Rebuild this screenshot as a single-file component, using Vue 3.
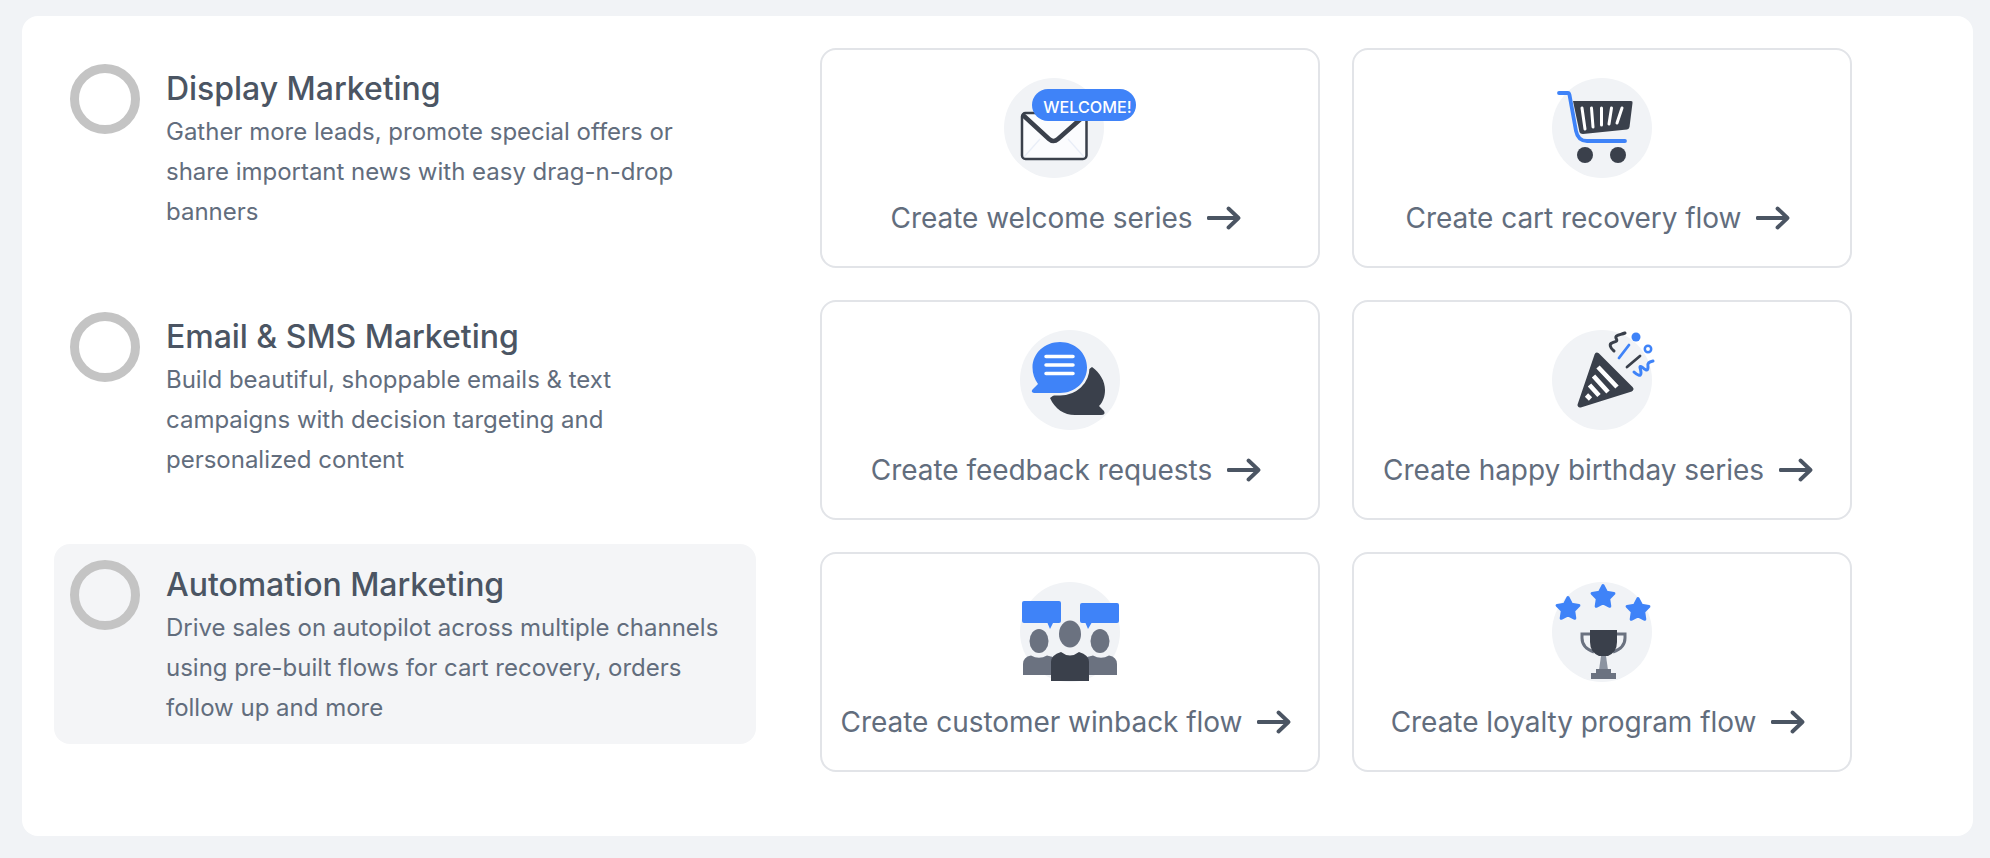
<script setup>
const features = [
  { title: 'Display Marketing', text: 'Gather more leads, promote special offers or share important news with easy drag-n-drop banners', active: false },
  { title: 'Email & SMS Marketing', text: 'Build beautiful, shoppable emails & text campaigns with decision targeting and personalized content', active: false },
  { title: 'Automation Marketing', text: 'Drive sales on autopilot across multiple channels using pre-built flows for cart recovery, orders follow up and more', active: true }
]
const tiles = [
  { id: 'welcome', label: 'Create welcome series' },
  { id: 'cart', label: 'Create cart recovery flow' },
  { id: 'feedback', label: 'Create feedback requests' },
  { id: 'birthday', label: 'Create happy birthday series' },
  { id: 'winback', label: 'Create customer winback flow' },
  { id: 'loyalty', label: 'Create loyalty program flow' }
]
const starPath = (cx, cy, r) => {
  const pts = []
  for (let i = 0; i < 10; i++) {
    const rad = i % 2 ? r * 0.52 : r
    const a = (Math.PI / 5) * i - Math.PI / 2
    pts.push(`${(cx + rad * Math.cos(a)).toFixed(1)},${(cy + rad * Math.sin(a)).toFixed(1)}`)
  }
  return pts.join(' ')
}
</script>

<template>
  <main class="page">
    <section class="card">
      <div class="features">
        <article v-for="f in features" :key="f.title" class="feature" :class="{ active: f.active }">
          <span class="ring"></span>
          <div class="copy">
            <h3>{{ f.title }}</h3>
            <p>{{ f.text }}</p>
          </div>
        </article>
      </div>
      <div class="tiles">
        <a v-for="t in tiles" :key="t.id" class="tile">
          <svg v-if="t.id === 'welcome'" class="icon wide" viewBox="0 0 132 100">
            <circle cx="50" cy="50" r="50" fill="#f1f3f6" />
            <rect x="18" y="35" width="64.500" height="46" rx="3.500" fill="#fbfcfe" stroke="#3a404b" stroke-width="2.500" />
            <path d="M20 79 36 61M80 79 64 61" stroke="#e9eef8" stroke-width="1.200" fill="none" />
            <path d="M20 38 45 61Q49.500 65 54 61L80 38" stroke="#3a404b" stroke-width="4.500" fill="none" stroke-linecap="round" />
            <rect x="28" y="11" width="104" height="32" rx="16" fill="#3f83f8" />
            <text x="83.500" y="34.500" class="badge" text-anchor="middle">WELCOME!</text>
          </svg>
          <svg v-else-if="t.id === 'cart'" class="icon" viewBox="0 0 100 100">
            <circle cx="50" cy="50" r="50" fill="#f1f3f6" />
            <path d="M21 23H79Q81 23 80.500 25L77.500 49Q77 51 75 51.500L31 56Q28 56 27.500 54Z" fill="#3a404b" />
            <path d="M30 30 33 51M39.500 30 41 49M49.500 30V47M59.500 30 57 46M70 30 65 45" stroke="#fff" stroke-width="3" stroke-linecap="round" fill="none" />
            <path d="M7 15H16Q17 15 17.500 17L24 53Q26 63 35 63H73" stroke="#3f83f8" stroke-width="3.800" stroke-linecap="round" fill="none" />
            <circle cx="33" cy="77" r="8" fill="#3a404b" />
            <circle cx="66" cy="77" r="8" fill="#3a404b" />
          </svg>
          <svg v-else-if="t.id === 'feedback'" class="icon" viewBox="0 0 100 100">
            <circle cx="50" cy="50" r="50" fill="#f1f3f6" />
            <path d="M72 37C80 43 85 51 85 60 85 66 83 72 79 76L84 81Q86 85 81 85H55C44 85 35 79 30 68Z" fill="#3a404b" />
            <path class="halo" d="M40 12C55 12 67 23 67 37.500 67 52 55 63 40 63H14Q10.500 62 12.500 59.500L18 54C14.500 49 12.500 44 12.500 37.500 12.500 23 25 12 40 12Z" fill="#3f83f8" stroke="#f1f3f6" stroke-width="5" />
            <path d="M26 26.500H53M26 35H53M26 43.500H53" stroke="#fff" stroke-width="3.500" stroke-linecap="round" />
          </svg>
          <svg v-else-if="t.id === 'birthday'" class="icon" viewBox="0 0 100 100">
            <circle cx="50" cy="50" r="50" fill="#f1f3f6" />
            <path d="M28 75 45 25 79 59Z" fill="#3a404b" stroke="#3a404b" stroke-width="5" stroke-linejoin="round" />
            <path d="M46 37 65 57M41.500 46 56 62M37.500 55 47 65.500M34.500 65 38.500 69" stroke="#fff" stroke-width="4.600" fill="none" />
            <path d="M62 21C58 18 57 14 60 13 64 11 66 12 64 8 63 5 68 5 73 3" stroke="#3a404b" stroke-width="3" stroke-linecap="round" stroke-linejoin="round" fill="none" />
            <circle cx="84" cy="7" r="4.500" fill="#3f83f8" />
            <circle cx="96" cy="19" r="3.200" fill="none" stroke="#3f83f8" stroke-width="2.500" />
            <path d="M67 28 77 15" stroke="#3f83f8" stroke-width="2.800" stroke-linecap="round" />
            <path d="M75 37 88 26" stroke="#3a404b" stroke-width="2.800" stroke-linecap="round" />
            <path d="M82 42C85 45 89 47 89 43 89 39 86 35 90 37 93 40 96 42 96 37 95 33 97 32 101 31" stroke="#3f83f8" stroke-width="3" stroke-linecap="round" stroke-linejoin="round" fill="none" />
          </svg>
          <svg v-else-if="t.id === 'winback'" class="icon" viewBox="0 0 100 100">
            <circle cx="50" cy="50" r="50" fill="#f1f3f6" />
            <path d="M4 19H39Q41 19 41 21V39Q41 41 39 41H33L30 47 27.500 41H4Q2 41 2 39V21Q2 19 4 19Z" fill="#3f83f8" />
            <path d="M62 21H97Q99 21 99 23V39Q99 41 97 41H71.500L68 47 65.500 41H62Q60 41 60 39V23Q60 21 62 21Z" fill="#3f83f8" />
            <ellipse cx="19" cy="59" rx="9.500" ry="12" fill="#6b7280" />
            <ellipse cx="80" cy="59" rx="9.500" ry="12" fill="#6b7280" />
            <ellipse cx="50" cy="52" rx="11" ry="13.500" fill="#6b7280" />
            <path d="M3 93V82Q3 75 11 73.500 19 78 27 73.500L33 75V93Z" fill="#6b7280" />
            <path d="M97 93V82Q97 75 89 73.500 81 78 73 73.500L67 75V93Z" fill="#6b7280" />
            <path d="M31 99V80Q31 73 41 70 50 77 59 70 69 73 69 80V99Z" fill="#3a404b" />
          </svg>
          <svg v-else class="icon" viewBox="0 0 100 100">
            <circle cx="50" cy="50" r="50" fill="#f1f3f6" />
            <polygon :points="starPath(16, 27, 11.500)" fill="#3f83f8" stroke="#3f83f8" stroke-width="3" stroke-linejoin="round" />
            <polygon :points="starPath(51, 15, 11.500)" fill="#3f83f8" stroke="#3f83f8" stroke-width="3" stroke-linejoin="round" />
            <polygon :points="starPath(86, 28, 11.500)" fill="#3f83f8" stroke="#3f83f8" stroke-width="3" stroke-linejoin="round" />
            <path d="M38 52H30V56Q30 66 42 70M65 52H73V56Q73 66 61 70" fill="none" stroke="#6b7280" stroke-width="3" />
            <path d="M38 48H65V60Q65 70 56 74H47Q38 70 38 60Z" fill="#3a404b" />
            <path d="M49 74H54L56 88H47Z" fill="#8b93a0" />
            <rect x="44" y="87" width="15" height="5" fill="#6b7280" />
            <rect x="39" y="91" width="25" height="6" fill="#6b7280" />
          </svg>
          <span class="label">
            {{ t.label }}
            <svg class="arrow" viewBox="0 0 40 24">
              <path d="M1.500 12H31.500M21.500 2.500 31.500 12 21.500 21.500" fill="none" stroke="#4b5563" stroke-width="3.800" stroke-linecap="round" stroke-linejoin="round" />
            </svg>
          </span>
        </a>
      </div>
    </section>
  </main>
</template>

<style>
html, body { margin: 0; background: #f1f3f6; }
</style>

<style scoped>
.page {
  box-sizing: border-box;
  height: 858px;
  padding: 16px 17px 22px 22px;
  background: #f1f3f6;
  font-family: Inter, "Liberation Sans", sans-serif;
}
.card {
  box-sizing: border-box;
  height: 820px;
  display: flex;
  gap: 64px;
  padding: 32px;
  background: #fff;
  border-radius: 16px;
}
.features {
  width: 702px;
  flex: none;
  display: flex;
  flex-direction: column;
  gap: 48px;
}
.feature {
  display: flex;
  gap: 26px;
  padding: 16px;
  border-radius: 16px;
}
.feature.active { background: #f4f5f7; }
.ring {
  flex: none;
  box-sizing: border-box;
  width: 70px;
  height: 70px;
  border: 9px solid #c4c4c4;
  border-radius: 50%;
}
.copy { max-width: 560px; }
.copy h3 {
  margin: 0 0 -2px;
  font-size: 32px;
  line-height: 50px;
  font-weight: 500;
  letter-spacing: -0.03px;
  color: #4b5563;
}
.copy p {
  margin: 0;
  font-size: 24px;
  line-height: 40px;
  letter-spacing: -0.01px;
  color: #626d7d;
}
.tiles {
  display: grid;
  grid-template-columns: 500px 500px;
  grid-auto-rows: 220px;
  gap: 32px;
  align-content: start;
}
.tile {
  box-sizing: border-box;
  display: flex;
  flex-direction: column;
  align-items: center;
  padding-top: 28px;
  border: 2px solid #e2e4e8;
  border-radius: 16px;
}
.icon {
  display: block;
  width: 100px;
  height: 100px;
  flex: none;
  overflow: visible;
}
.icon.wide { width: 132px; }
.halo { paint-order: stroke; }
.badge {
  font-size: 16.2px;
  font-weight: 500;
  fill: #fff;
}
.label {
  display: flex;
  align-items: center;
  gap: 15px;
  margin-top: 20px;
  padding-right: 2px;
  font-size: 28px;
  line-height: 40px;
  letter-spacing: -0.05px;
  color: #626d7d;
  white-space: nowrap;
}
.arrow {
  display: block;
  width: 40px;
  height: 24px;
  flex: none;
}
</style>
